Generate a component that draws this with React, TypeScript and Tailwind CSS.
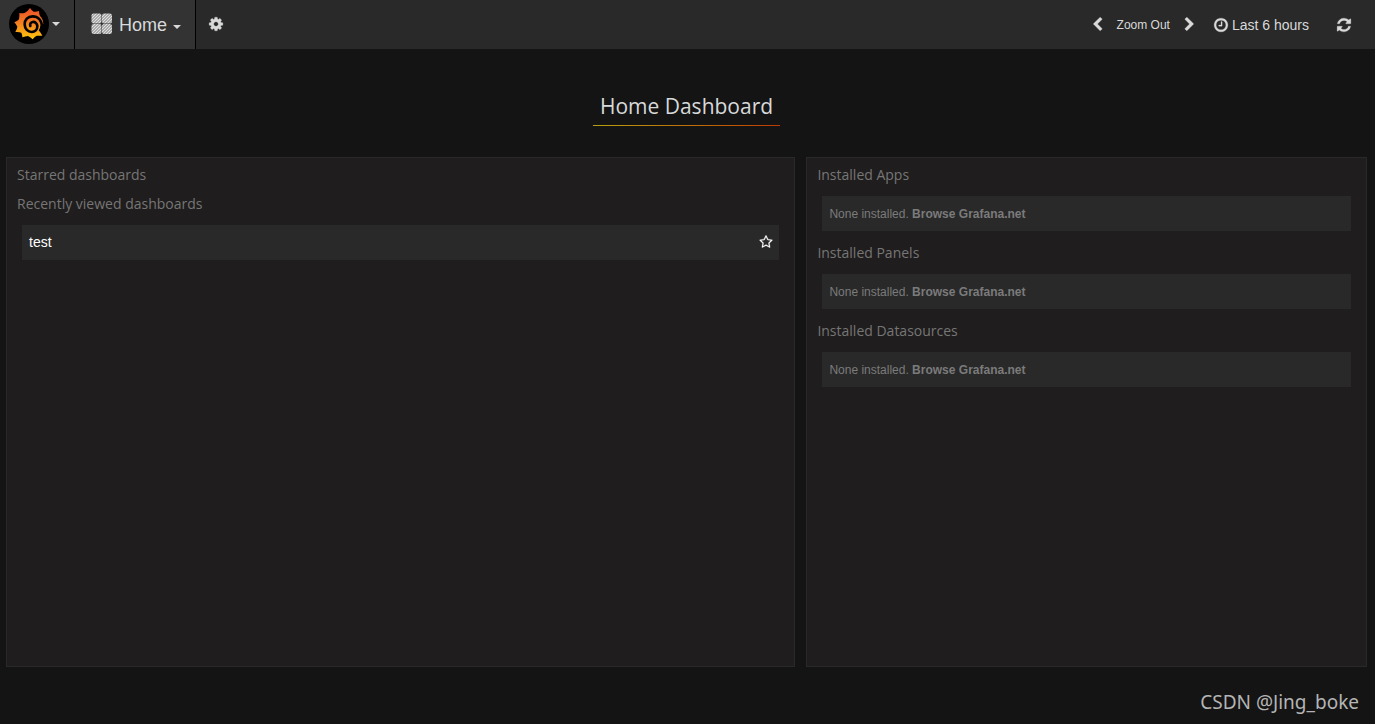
import React from 'react';

const ICONS = {
    cog: 'M1152 896q0-106-75-181t-181-75-181 75-75 181 75 181 181 75 181-75 75-181zm512-109v222q0 12-8 23t-20 13l-185 28q-19 54-39 91 35 50 107 138 10 12 10 25t-9 23q-27 37-99 108t-94 71q-12 0-26-9l-138-108q-44 23-91 38-16 136-29 186-7 28-36 28h-222q-14 0-24.5-8.5t-11.5-21.5l-28-184q-49-16-90-37l-141 107q-10 9-25 9-14 0-25-11-126-114-165-168-7-10-7-23 0-12 8-23 15-21 51-66.5t54-70.5q-27-50-41-99l-183-27q-13-2-21-12.5t-8-23.5v-222q0-12 8-23t19-13l186-28q14-46 39-92-40-57-107-138-10-12-10-24 0-10 9-23 26-36 98.5-107.5t94.5-71.5q13 0 26 10l138 107q44-23 91-38 16-136 29-186 7-28 36-28h222q14 0 24.5 8.5t11.5 21.5l28 184q49 16 90 37l142-107q9-9 24-9 13 0 25 10 129 119 165 170 7 8 7 22 0 12-8 23-15 21-51 66.5t-54 70.5q26 50 41 98l183 28q13 2 21 12.5t8 23.5z',
    chevronLeft: 'M1427 301l-531 531 531 531q19 19 19 45t-19 45l-166 166q-19 19-45 19t-45-19l-742-742q-19-19-19-45t19-45l742-742q19-19 45-19t45 19l166 166q19 19 19 45t-19 45z',
    chevronRight: 'M1363 877l-742 742q-19 19-45 19t-45-19l-166-166q-19-19-19-45t19-45l531-531-531-531q-19-19-19-45t19-45l166-166q19-19 45-19t45 19l742 742q19 19 19 45t-19 45z',
    clock: 'M1024 544v448q0 14-9 23t-23 9h-320q-14 0-23-9t-9-23v-64q0-14 9-23t23-9h224v-352q0-14 9-23t23-9h64q14 0 23 9t9 23zm416 352q0-148-73-273t-198-198-273-73-273 73-198 198-73 273 73 273 198 198 273 73 273-73 198-198 73-273zm224 0q0 209-103 385.5t-279.5 279.5-385.5 103-385.5-103-279.5-279.5-103-385.5 103-385.5 279.5-279.5 385.5-103 385.5 103 279.5 279.5 103 385.5z',
    refresh: 'M1639 1056q0 5-1 7-64 268-268 434.5t-478 166.5q-146 0-282.5-55t-243.5-157l-129 129q-19 19-45 19t-45-19-19-45v-448q0-26 19-45t45-19h448q26 0 45 19t19 45-19 45l-137 137q71 66 161 102t187 36q134 0 250-65t186-179q11-17 53-117 8-23 30-23h192q13 0 22.5 9.5t9.5 22.5zm25-800v448q0 26-19 45t-45 19h-448q-26 0-45-19t-19-45 19-45l138-138q-148-137-349-137-134 0-250 65t-186 179q-11 17-53 117-8 23-30 23h-199q-13 0-22.5-9.5t-9.5-22.5v-7q65-268 270-434.5t480-166.5q146 0 284 55.5t245 156.5l130-129q19-19 45-19t45 19 19 45z',
    star: 'M1201 1004l306-297-422-62-189-382-189 382-422 62 306 297-73 421 378-199 377 199zm527-357q0 22-26 48l-363 354 86 500q1 7 1 20 0 50-41 50-19 0-40-12l-449-236-449 236q-22 12-40 12-21 0-31.5-14.5t-10.5-35.5q0-6 2-20l86-500-364-354q-25-27-25-48 0-37 56-46l502-73 225-455q19-41 49-41t49 41l225 455 502 73q56 9 56 46z',
};

const Icon: React.FC<{ name: keyof typeof ICONS; className?: string }> = ({ name, className }) => (
    <svg viewBox="0 0 1792 1792" fill="currentColor" stroke="currentColor" strokeWidth="30" aria-hidden="true" className={className}>
        <path d={ICONS[name]} />
    </svg>
);

const Caret = () => (
    <svg viewBox="0 0 8 4" fill="currentColor" aria-hidden="true" className="h-1 w-2">
        <path d="M0 0h8L4 4z" />
    </svg>
);

const Logo = () => (
    <svg viewBox="27 12 120 120" aria-hidden="true" className="size-10">
        <defs>
            <linearGradient id="logoFill" gradientUnits="userSpaceOnUse" x1="90" y1="24" x2="90" y2="118">
                <stop offset="0" stopColor="#ee4f2b" />
                <stop offset="0.45" stopColor="#f47b20" />
                <stop offset="1" stopColor="#fdc90d" />
            </linearGradient>
        </defs>
        <circle cx="87" cy="72" r="60" fill="#000" />
        {/* toothed body, open on the right */}
        <path
            d="M90 24Q94 30 101 35Q109 36 117 33Q117 41 120 48Q129 56 130 72L121 78Q121 85 116 91Q122 98 127 107Q118 107 110 107Q103 111 98 118Q92 112 84 108Q76 109 67 112Q67 104 64 98Q57 95 46 96Q51 88 52 80Q49 73 43 67Q52 64 57 58Q59 50 58 39Q67 41 75 38Q84 33 90 24Z"
            fill="url(#logoFill)"
        />
        {/* spiral cut */}
        <path
            d="M126 80C125 60 113 49 98 49C83 49 74 60 74 73C74 87 84 96 95 96C105 96 112 89 112 79C112 70 105 65 98 66C92 67 89 72 91 78"
            fill="none"
            stroke="#000"
            strokeWidth="8"
            strokeLinecap="round"
        />
    </svg>
);

const DashboardsIcon = () => (
    <svg viewBox="0 0 22 22" aria-hidden="true" className="size-[22px]">
        <defs>
            <pattern id="hatch" width="3" height="3" patternUnits="userSpaceOnUse">
                <rect width="3" height="3" fill="#949494" />
                <path d="M-1 1l2-2M0 3l3-3M2 4l2-2" stroke="#e4e4e4" strokeWidth="1.1" />
            </pattern>
        </defs>
        <g fill="url(#hatch)">
            <rect x="0.5" y="0.5" width="10" height="10" rx="2" />
            <rect x="11" y="0.5" width="10" height="10" rx="2" />
            <rect x="0.5" y="11" width="10" height="10" rx="2" />
            <rect x="11" y="11" width="10" height="10" rx="2" />
        </g>
    </svg>
);

const Navbar = () => (
    <nav className="flex h-[49px] bg-[#292929] text-[#d8d9da]">
        <button aria-label="Main menu" className="flex items-center gap-[3px] border-r border-black bg-[#333333] pr-[14px] pb-px pl-[9px]">
            <Logo />
            <Caret />
        </button>
        <button className="flex items-center border-r border-black bg-[#333333] pr-[14px] pb-px pl-4">
            <DashboardsIcon />
            <span className="mr-[6px] ml-[6px] pt-[2px] text-lg">Home</span>
            <span className="pt-[5px]">
                <Caret />
            </span>
        </button>
        <button aria-label="Settings" className="px-3 pb-px">
            <Icon name="cog" className="size-4" />
        </button>
        <div className="ml-auto flex items-center pr-[23px]">
            <button aria-label="Shift time backward">
                <Icon name="chevronLeft" className="size-[15px]" />
            </button>
            <button className="px-3 text-xs">Zoom Out</button>
            <button aria-label="Shift time forward">
                <Icon name="chevronRight" className="size-[15px]" />
            </button>
            <button className="ml-4 flex items-center gap-[3px] text-sm">
                <Icon name="clock" className="size-4" />
                <span className="pt-px">Last 6 hours</span>
            </button>
            <button aria-label="Refresh" className="ml-[27px]">
                <Icon name="refresh" className="size-4" />
            </button>
        </div>
    </nav>
);

const Heading: React.FC<{ children: React.ReactNode }> = ({ children }) => (
    <h2 className="px-[10px] pt-[3px] pb-[5px] font-['Open_Sans',sans-serif] text-sm leading-[21px] text-[#767676]">{children}</h2>
);

const installed = ['Installed Apps', 'Installed Panels', 'Installed Datasources'];

const App: React.FC = () => {
    return (
        <div className="min-h-screen bg-[#141414] font-['Liberation_Sans',Arial,sans-serif]">
            <Navbar />

            <header className="flex justify-center pt-[41px] pr-[2px]">
                <div>
                    <h1 className="px-[7px] pb-[3px] font-['Open_Sans',sans-serif] text-[21px] leading-8 text-[#d8d9da]">Home Dashboard</h1>
                    <div className="h-px bg-linear-to-r from-[#b79f0f] to-[#bd3803]"></div>
                </div>
            </header>

            <main className="mt-[31px] grid grid-cols-[58%_1fr] gap-[11px] pr-2 pl-[6px]">
                <section className="min-h-[510px] border border-[#292929] bg-[#1f1d1d] pt-[3px]">
                    <Heading>Starred dashboards</Heading>
                    <Heading>Recently viewed dashboards</Heading>
                    <div className="mx-[15px] mt-[6px] flex h-[35px] items-center justify-between bg-[#292929] pr-[6px] pb-[2px] pl-[7px] text-white">
                        <a href="#test" className="text-sm">test</a>
                        <button aria-label="Star test">
                            <Icon name="star" className="size-[14px]" />
                        </button>
                    </div>
                </section>

                <section className="min-h-[510px] border border-[#292929] bg-[#1f1d1d] pt-[3px]">
                    {installed.map((title) => (
                        <div key={title} className="mb-2">
                            <Heading>{title}</Heading>
                            <p className="mx-[15px] mt-[6px] h-[35px] bg-[#292929] px-[7px] text-xs leading-[36px] text-[#7b7b7b]">
                                None installed.{' '}
                                <a href="#browse" className="font-bold">Browse Grafana.net</a>
                            </p>
                        </div>
                    ))}
                </section>
            </main>

            <footer className="pt-5 pr-4 text-right font-['Noto_Sans',sans-serif] text-[19px] leading-[30px] text-[#b4b4b4]">
                CSDN @Jing_boke
            </footer>
        </div>
    );
};

export default App;
